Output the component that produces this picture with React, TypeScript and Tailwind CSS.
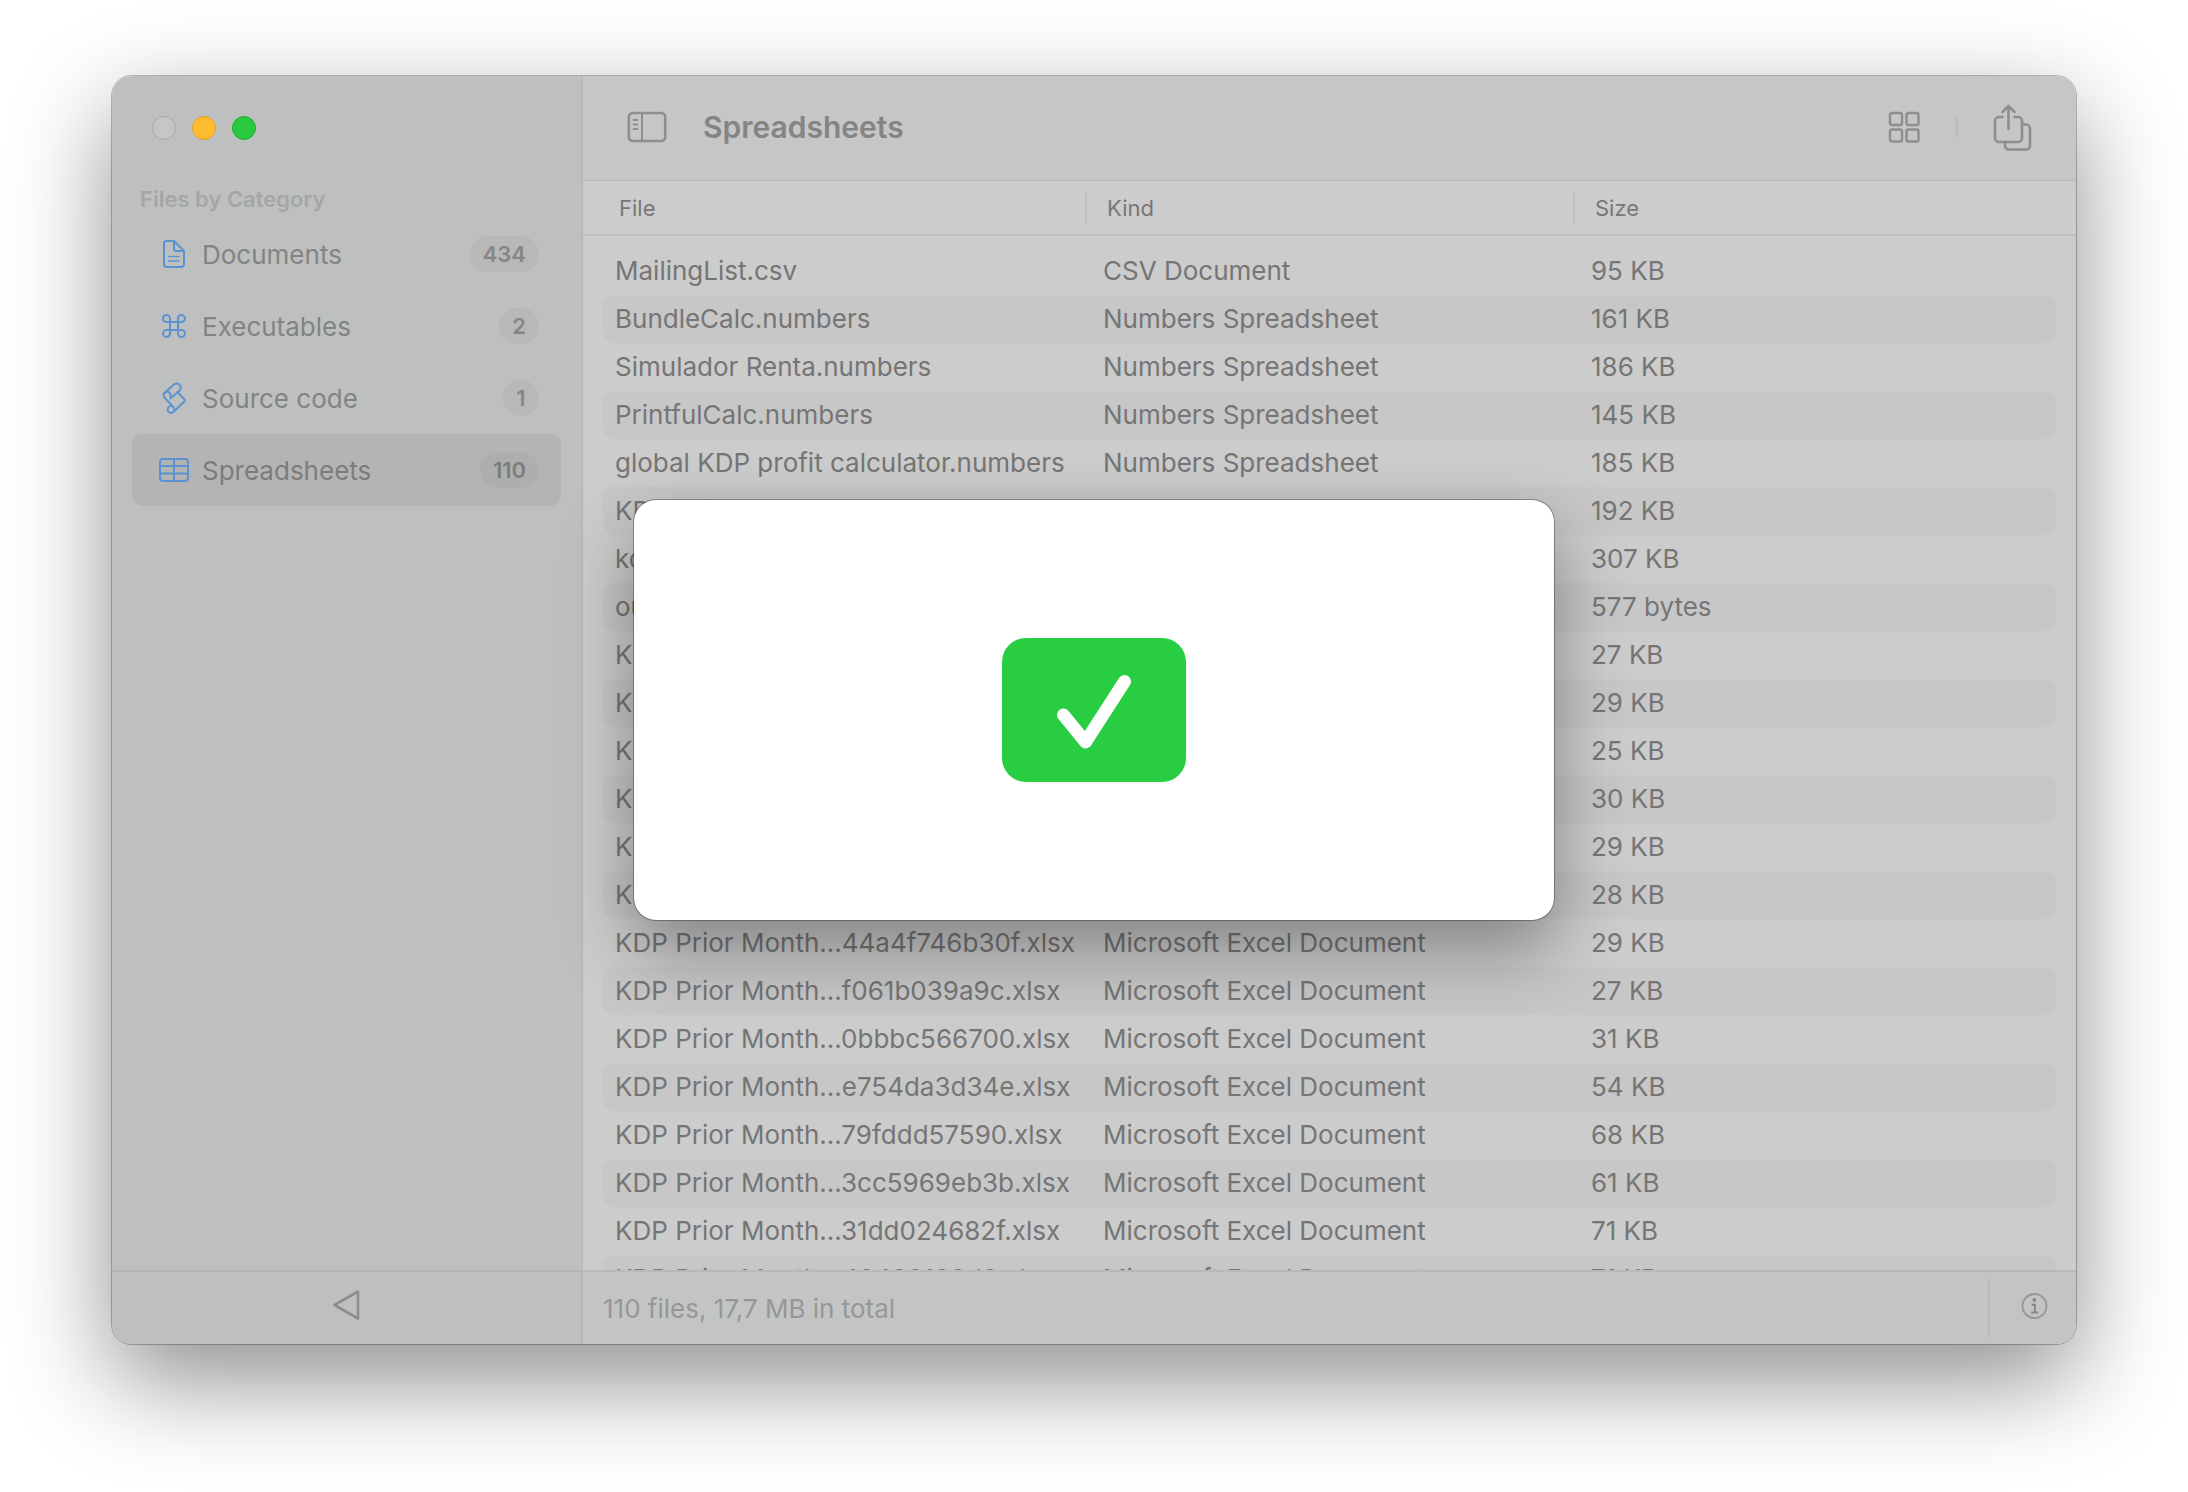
import { useId } from "react";

interface Category {
  name: string;
  count: number;
  icon: "document" | "command" | "script" | "table";
}

interface FileRow {
  file: string;
  kind: string;
  size: string;
}

const categories: Category[] = [
  { name: "Documents", count: 434, icon: "document" },
  { name: "Executables", count: 2, icon: "command" },
  { name: "Source code", count: 1, icon: "script" },
  { name: "Spreadsheets", count: 110, icon: "table" },
];

const EXCEL = "Microsoft Excel Document";
const NUMBERS = "Numbers Spreadsheet";

const files: FileRow[] = [
  { file: "MailingList.csv", kind: "CSV Document", size: "95 KB" },
  { file: "BundleCalc.numbers", kind: NUMBERS, size: "161 KB" },
  { file: "Simulador Renta.numbers", kind: NUMBERS, size: "186 KB" },
  { file: "PrintfulCalc.numbers", kind: NUMBERS, size: "145 KB" },
  { file: "global KDP profit calculator.numbers", kind: NUMBERS, size: "185 KB" },
  { file: "KDP.numbers", kind: NUMBERS, size: "192 KB" },
  { file: "kdp.numbers", kind: NUMBERS, size: "307 KB" },
  { file: "output.csv", kind: "CSV Document", size: "577 bytes" },
  { file: "KDP Prior Month.xlsx", kind: EXCEL, size: "27 KB" },
  { file: "KDP Prior Month.xlsx", kind: EXCEL, size: "29 KB" },
  { file: "KDP Prior Month.xlsx", kind: EXCEL, size: "25 KB" },
  { file: "KDP Prior Month.xlsx", kind: EXCEL, size: "30 KB" },
  { file: "KDP Prior Month.xlsx", kind: EXCEL, size: "29 KB" },
  { file: "KDP Prior Month.xlsx", kind: EXCEL, size: "28 KB" },
  { file: "KDP Prior Month…44a4f746b30f.xlsx", kind: EXCEL, size: "29 KB" },
  { file: "KDP Prior Month…f061b039a9c.xlsx", kind: EXCEL, size: "27 KB" },
  { file: "KDP Prior Month…0bbbc566700.xlsx", kind: EXCEL, size: "31 KB" },
  { file: "KDP Prior Month…e754da3d34e.xlsx", kind: EXCEL, size: "54 KB" },
  { file: "KDP Prior Month…79fddd57590.xlsx", kind: EXCEL, size: "68 KB" },
  { file: "KDP Prior Month…3cc5969eb3b.xlsx", kind: EXCEL, size: "61 KB" },
  { file: "KDP Prior Month…31dd024682f.xlsx", kind: EXCEL, size: "71 KB" },
  { file: "KDP Prior Month…48432198d3.xlsx", kind: EXCEL, size: "71 KB" },
];

function CategoryIcon({ icon }: { icon: Category["icon"] }) {
  return (
    <svg
      viewBox="0 0 32 32"
      className="size-8 flex-shrink-0 text-[#5b92d2]"
      fill="none"
      stroke="currentColor"
      strokeWidth="2"
      strokeLinecap="round"
      strokeLinejoin="round"
      aria-hidden="true"
    >
      {icon === "document" && (
        <>
          <path d="M8.5 3H16l10 10v13a3 3 0 0 1-3 3H9a3 3 0 0 1-3-3V5.5A2.5 2.5 0 0 1 8.5 3z" />
          <path d="M16 3.500V11a2 2 0 0 0 2 2h7.500" />
          <path d="M10.500 18.500h10.500M10.500 23h10.500" strokeWidth="1.500" />
        </>
      )}
      {icon === "command" && (
        <path d="M12 12h8v8h-8zM12 12H8.500A3.500 3.500 0 1 1 12 8.500zM20 12V8.500a3.500 3.500 0 1 1 3.500 3.500zM20 20h3.500a3.500 3.500 0 1 1-3.500 3.500zM12 20v3.500A3.500 3.500 0 1 1 8.500 20z" />
      )}
      {icon === "script" && (
        <>
          <path d="M6.500 11 15.800 2.600a4.100 4.100 0 0 1 5.800 0 4.100 4.100 0 0 1 0 5.800L12.500 16.500v-4" />
          <path d="M12.500 12.500a3.400 3.400 0 0 0-6-1.500 3.600 3.600 0 0 0 .3 5L14.500 24" />
          <path d="M19.500 10.300 26 16.800a2 2 0 0 1 0 3L15.500 30" />
          <circle cx="13" cy="27.500" r="3.400" />
        </>
      )}
      {icon === "table" && (
        <>
          <rect x="2" y="5" width="28" height="22" rx="3" />
          <path d="M2 12h28M2 19.500h28M16 5v22" />
        </>
      )}
    </svg>
  );
}

function Sidebar() {
  const headingId = useId();

  return (
    <aside className="flex w-[471px] flex-shrink-0 flex-col border-r-2 border-[#b7b9b8] bg-[#bec0bf]">
      {/* Window controls */}
      <div className="flex gap-4 px-10 pt-10">
        <button aria-label="Close" className="size-6 rounded-full border border-[#a5a7a7] bg-[#c4c6c8]" />
        <button aria-label="Minimize" className="size-6 rounded-full border border-[#e0a029] bg-[#febc2e]" />
        <button aria-label="Zoom" className="size-6 rounded-full border border-[#24ad36] bg-[#28c840]" />
      </div>

      <nav aria-labelledby={headingId} className="flex-1 px-5 pt-11">
        <h2 id={headingId} className="mb-1 px-2 text-[22px] leading-[30px] font-semibold text-[#a5a6a6]">
          Files by Category
        </h2>
        {categories.map((category) => {
          const selected = category.name === "Spreadsheets";
          return (
            <button
              key={category.name}
              aria-current={selected ? "page" : undefined}
              className={`flex h-[72px] w-full items-center rounded-[10px] pr-[22px] pl-[26px] ${
                selected ? "bg-[#b4b4b4] text-[#7c7c7c]" : "text-[#828483]"
              }`}
            >
              <CategoryIcon icon={category.icon} />
              <span className="ml-3 flex-1 text-left text-[26px]">{category.name}</span>
              <span
                className={`min-w-9 rounded-full px-[13px] text-center text-[22px] leading-9 font-semibold ${
                  selected ? "bg-[#adafae]" : "bg-[#b8b8b8] text-[#868686]"
                }`}
              >
                {category.count}
              </span>
            </button>
          );
        })}
      </nav>

      <div className="flex h-[74px] items-center justify-center border-t-2 border-[#b3b5b4] pb-1.5">
        <button aria-label="Back">
          <svg viewBox="0 0 28 32" className="h-8 w-7" fill="none" stroke="#8c8d8d" strokeWidth="2.600" strokeLinejoin="round">
            <path d="M25 2.500v27L1.500 16z" />
          </svg>
        </button>
      </div>
    </aside>
  );
}

function Toolbar() {
  return (
    <header className="flex h-[105px] flex-shrink-0 items-center border-b border-[#b9b9b9] bg-[#c6c6c6] px-11 pb-0.5 text-[#8e8e8e]">
      <button aria-label="Toggle sidebar">
        <svg viewBox="0 0 40 32" className="h-8 w-10" fill="none" stroke="currentColor" strokeWidth="2.600" strokeLinecap="round">
          <rect x="1.800" y="2" width="36.400" height="28" rx="4" />
          <path d="M15 2v28" strokeWidth="2" />
          <path d="M6.500 9h4M6.500 13.500h4M6.500 18h4" strokeWidth="1.800" />
        </svg>
      </button>
      <h1 className="ml-9 flex-1 text-[30px] font-semibold text-[#848484]">Spreadsheets</h1>
      <button aria-label="Grid view">
        <svg viewBox="0 0 32 32" className="size-8" fill="none" stroke="currentColor" strokeWidth="2.400">
          <rect x="2" y="2" width="12" height="12" rx="2" />
          <rect x="18.500" y="2" width="12" height="12" rx="2" />
          <rect x="2" y="18.500" width="12" height="12" rx="2" />
          <rect x="18.500" y="18.500" width="12" height="12" rx="2" />
        </svg>
      </button>
      <span className="mr-[34px] ml-9 h-5 w-0.5 bg-[#bbbbbb]" />
      <button aria-label="Share">
        <svg
          viewBox="0 0 40 48"
          className="h-12 w-10"
          fill="none"
          stroke="currentColor"
          strokeWidth="2.600"
          strokeLinecap="round"
          strokeLinejoin="round"
        >
          <path d="M10.500 14H7a4 4 0 0 0-4 4v17a4 4 0 0 0 4 4h19a4 4 0 0 0 4-4V18a4 4 0 0 0-4-4h-3.500" />
          <path d="M16.500 26V3.500M10.500 9l6-6 6 6" />
          <path d="M30 21.500h4a4 4 0 0 1 4 4V42.500a4 4 0 0 1-4 4H17a4 4 0 0 1-4-4v-3.500" />
        </svg>
      </button>
    </header>
  );
}

function FileTable() {
  return (
    <div className="min-h-0 flex-1 overflow-hidden bg-[#cccccc]">
      <table className="block text-left">
        <thead className="block border-b-2 border-[#c0c0c0] px-5 text-[22px] leading-8 text-[#777777]">
          <tr className="grid grid-cols-[488px_488px_1fr] pt-[11px] pb-2.5">
            <th className="mr-1 border-r-2 border-[#c0c0c0] pl-4 font-normal">File</th>
            <th className="mr-1 border-r-2 border-[#c0c0c0] pl-4 font-normal">Kind</th>
            <th className="pl-4 font-normal">Size</th>
          </tr>
        </thead>
        <tbody className="block px-5 pt-[11px] text-[26px] leading-[48px] text-[#757575]">
          {files.map((row, index) => (
            <tr
              key={index}
              className="grid grid-cols-[488px_488px_1fr] rounded-[10px] whitespace-nowrap even:bg-[#c7c7c7]"
            >
              <td className="pl-3">{row.file}</td>
              <td className="pl-3">{row.kind}</td>
              <td className="pl-3">{row.size}</td>
            </tr>
          ))}
        </tbody>
      </table>
    </div>
  );
}

function StatusBar() {
  return (
    <footer className="flex h-[74px] flex-shrink-0 items-center border-t-2 border-[#b9b9b9] bg-[#c3c5c4] pr-7 pl-5">
      <p className="flex-1 text-[26px] text-[#969797]">110 files, 17,7 MB in total</p>
      <span className="mr-[30px] h-[60px] w-0.5 bg-[#b9bbba]" />
      <button aria-label="Info" className="pb-1">
        <svg viewBox="0 0 28 28" className="size-7" fill="none" stroke="#979898" strokeWidth="1.900">
          <circle cx="14.500" cy="14" r="12" />
          <circle cx="14.300" cy="8" r="1.900" fill="#868787" stroke="none" />
          <path d="M11.700 12.700h3.200V20.500M11.200 20.500h7" stroke="#868787" strokeWidth="2" />
        </svg>
      </button>
    </footer>
  );
}

function SuccessDialog() {
  return (
    <div className="pointer-events-none absolute inset-0 flex items-center justify-center">
      <div
        role="dialog"
        aria-label="Done"
        className="flex h-[420px] w-[920px] items-center justify-center rounded-[22px] bg-white shadow-[0_0_0_1px_rgba(0,0,0,0.3),0_30px_70px_rgba(0,0,0,0.36)]"
      >
        <svg viewBox="0 0 184 144" className="h-36 w-46 rounded-3xl bg-[#28cd41]" fill="none">
          <path
            d="M61.500 77 83.500 104 122.500 43.500"
            stroke="white"
            strokeWidth="13"
            strokeLinecap="round"
            strokeLinejoin="round"
          />
        </svg>
      </div>
    </div>
  );
}

export default function App() {
  return (
    <div className="flex h-screen bg-white px-28 pt-19 pb-37 font-['Inter',sans-serif]">
      <div className="relative flex min-w-0 flex-1 rounded-[20px] shadow-[0_0_0_1px_rgba(0,0,0,0.25),0_36px_100px_rgba(0,0,0,0.45)]">
        <div className="flex min-w-0 flex-1 overflow-hidden rounded-[20px]">
          <Sidebar />
          <main className="flex min-w-0 flex-1 flex-col">
            <Toolbar />
            <FileTable />
            <StatusBar />
          </main>
        </div>
        <SuccessDialog />
      </div>
    </div>
  );
}
